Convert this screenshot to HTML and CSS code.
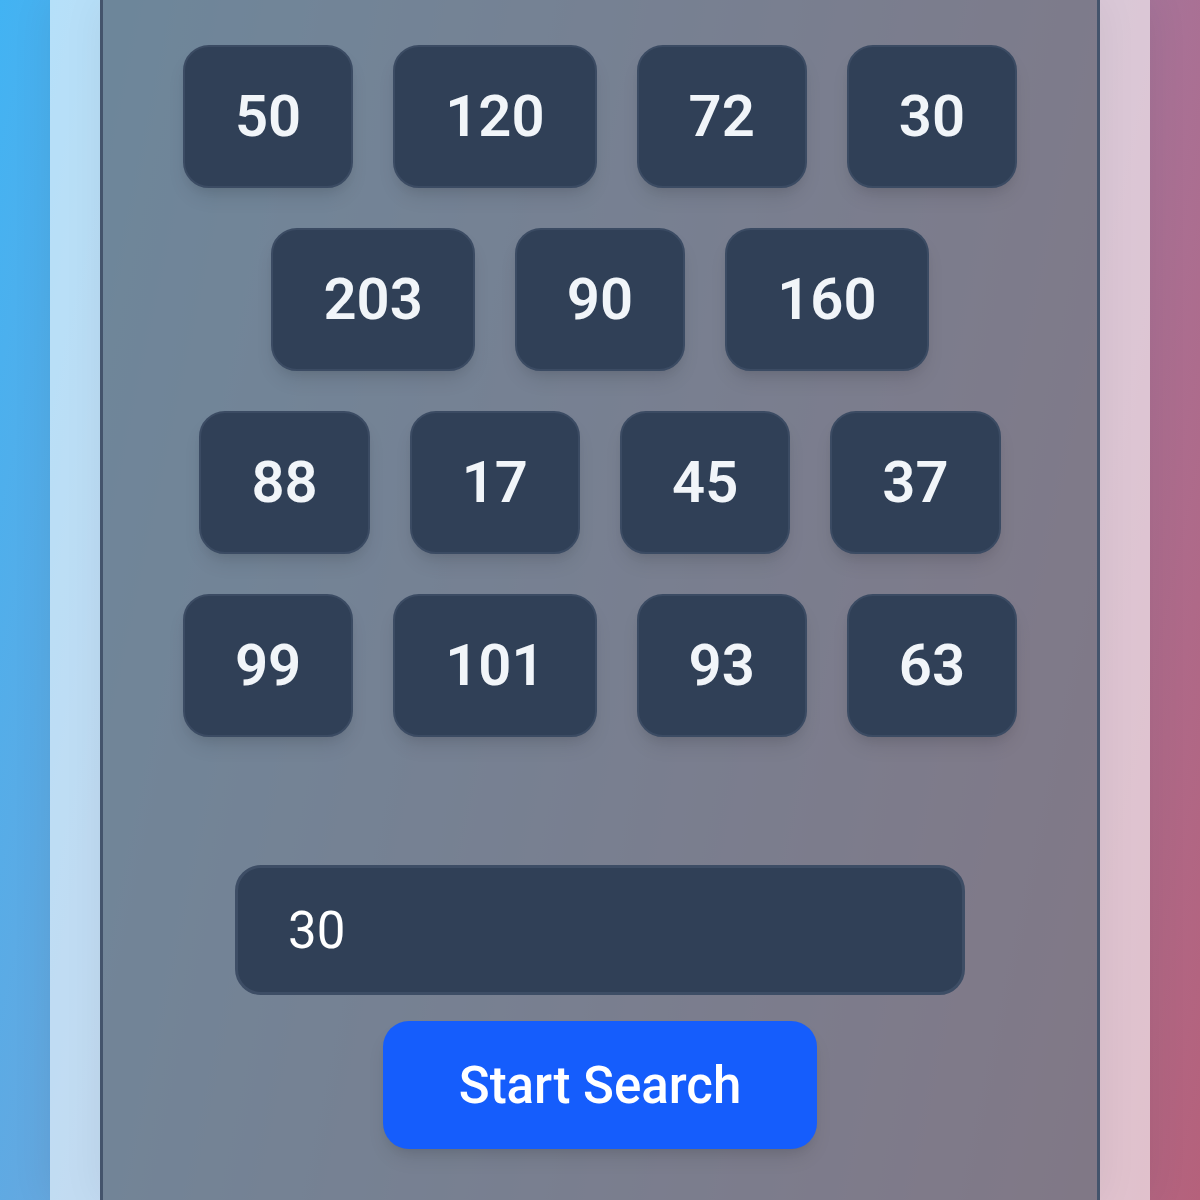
FILE: index.html
```html
<!DOCTYPE html>
<html lang="en">
<head>
  <meta charset="utf-8">
  <meta name="viewport" content="width=device-width, initial-scale=1">
  <title>Search</title>
  <link rel="stylesheet" href="styles.css">
</head>
<body>
  <div class="card">
    <main class="panel">
      <ul class="values">
        <li class="value">50</li>
        <li class="value">120</li>
        <li class="value">72</li>
        <li class="value">30</li>
        <li class="value">203</li>
        <li class="value">90</li>
        <li class="value">160</li>
        <li class="value">88</li>
        <li class="value">17</li>
        <li class="value">45</li>
        <li class="value">37</li>
        <li class="value">99</li>
        <li class="value">101</li>
        <li class="value">93</li>
        <li class="value">63</li>
      </ul>
      <form class="search">
        <input class="search-input" type="text" inputmode="numeric" value="30" aria-label="Number to find">
        <button class="search-button" type="button">Start Search</button>
      </form>
    </main>
  </div>
</body>
</html>
```
FILE: styles.css
```css
* {
  box-sizing: border-box;
}

body {
  margin: 0;
  min-height: 100vh;
  display: flex;
  padding: 0 50px;
  font-family: Roboto, "Liberation Sans", sans-serif;
  background: linear-gradient(102deg, #42b3f3, #64a8e0 20%, #a97195 82%, #b5617b);
}

.card {
  flex: 1;
  display: flex;
  padding: 0 50px;
  background: rgba(255, 255, 255, 0.6);
  box-shadow: 0 0 40px rgba(0, 0, 0, 0.07);
}

.panel {
  flex: 1;
  display: flex;
  flex-direction: column;
  align-items: center;
  gap: 128px;
  padding: 45px 72px 51px;
  border: solid #44546c;
  border-width: 0 3px;
  background: rgba(33, 45, 62, 0.5);
  box-shadow: 0 0 40px rgba(0, 0, 0, 0.06);
}

.values {
  display: flex;
  flex-wrap: wrap;
  justify-content: center;
  gap: 40px;
  margin: 0;
  padding: 0;
  list-style: none;
}

.value {
  padding: 36px 50px;
  border: 2px solid #3b4b63;
  border-radius: 26px;
  background: #304057;
  color: #f1f5f9;
  font-size: 58px;
  font-weight: 600;
  line-height: 67px;
  box-shadow: 0 12px 20px -4px rgba(0, 0, 0, 0.1), 0 6px 12px -6px rgba(0, 0, 0, 0.1);
}

.search {
  display: flex;
  flex-direction: column;
  align-items: center;
  gap: 26px;
  width: 100%;
}

.search-input,
.search-button {
  border-radius: 26px;
  font-family: inherit;
  font-size: 51px;
  color: #fff;
}

.search-input {
  width: 100%;
  max-width: 730px;
  height: 130px;
  padding: 0 50px;
  border: 3px solid #3d4d65;
  background: #304057;
}

.search-button {
  height: 128px;
  padding: 0 76px;
  border: 0;
  background: #155dfc;
  font-weight: 500;
  box-shadow: 0 12px 20px -4px rgba(0, 0, 0, 0.1), 0 6px 12px -6px rgba(0, 0, 0, 0.1);
}
```
